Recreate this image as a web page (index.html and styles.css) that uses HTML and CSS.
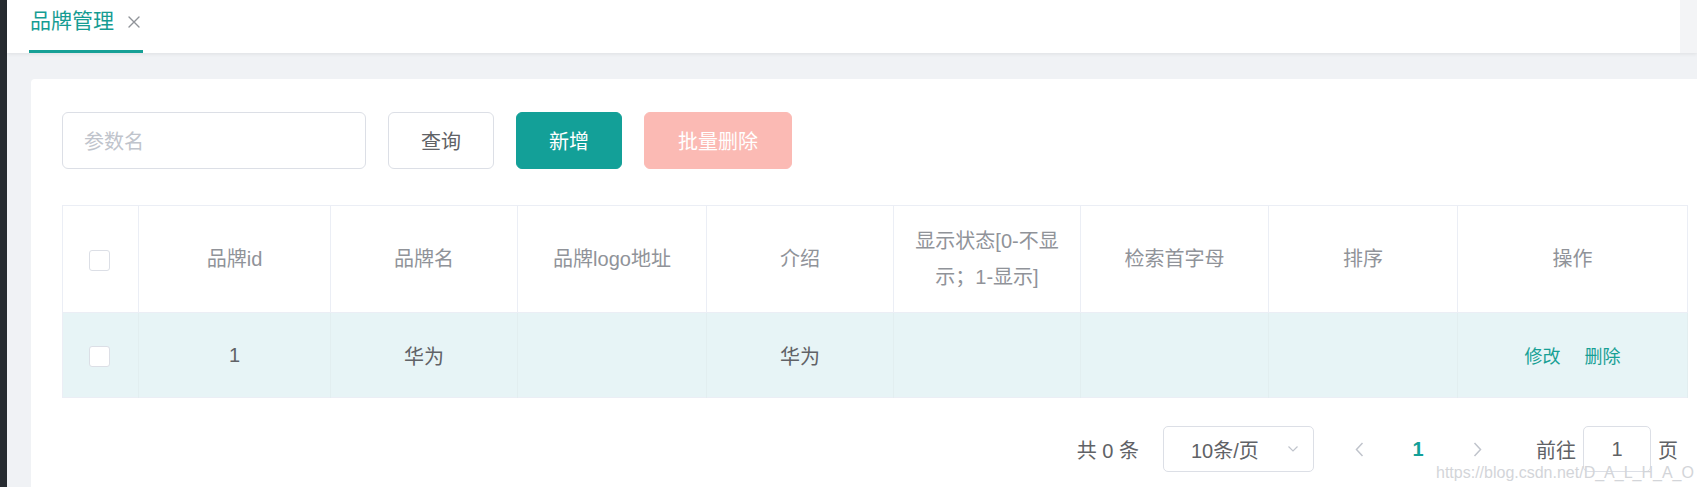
FILE: index.html
```html
<!DOCTYPE html>
<html lang="zh-CN">
<head>
<meta charset="utf-8">
<title>品牌管理</title>
<link rel="stylesheet" href="styles.css">
</head>
<body>
<div class="app">
  <div class="side-edge"></div>
  <div class="main">
    <div class="tabs-bar">
      <div class="tabs-white">
        <div class="tab active">
          <span class="tab-label">品牌管理</span>
          <svg class="tab-close" width="12" height="12" viewBox="0 0 12 12"><path d="M1 1L11 11M11 1L1 11" stroke="#909399" stroke-width="1.4" fill="none" stroke-linecap="round"/></svg>
        </div>
      </div>
      <div class="tabs-strip"></div>
    </div>
    <div class="content">
      <div class="card">
        <div class="toolbar">
          <div class="search-input"><span class="placeholder">参数名</span></div>
          <button class="btn btn-default">查询</button>
          <button class="btn btn-primary">新增</button>
          <button class="btn btn-danger-disabled">批量删除</button>
        </div>
        <table class="grid">
          <colgroup>
            <col class="c-check"><col class="c-id"><col class="c-name"><col class="c-logo"><col class="c-desc"><col class="c-show"><col class="c-letter"><col class="c-sort"><col>
          </colgroup>
          <thead>
            <tr>
              <th><span class="checkbox"></span></th>
              <th>品牌id</th>
              <th>品牌名</th>
              <th>品牌logo地址</th>
              <th>介绍</th>
              <th>显示状态[0-不显示；1-显示]</th>
              <th>检索首字母</th>
              <th>排序</th>
              <th>操作</th>
            </tr>
          </thead>
          <tbody>
            <tr class="body-row">
              <td><span class="checkbox"></span></td>
              <td>1</td>
              <td>华为</td>
              <td></td>
              <td>华为</td>
              <td></td>
              <td></td>
              <td></td>
              <td><span class="op-link">修改</span><span class="op-link">删除</span></td>
            </tr>
          </tbody>
        </table>
        <div class="pagination">
          <span class="total">共 0 条</span>
          <div class="size-select">
            <span>10条/页</span>
            <svg class="select-arrow" width="12" height="8" viewBox="0 0 12 8"><path d="M1.5 1.5L6 6L10.5 1.5" stroke="#c0c4cc" stroke-width="1.2" fill="none"/></svg>
          </div>
          <span class="pg-btn"><svg width="9" height="15" viewBox="0 0 9 15"><path d="M7.5 1L1.5 7.5L7.5 14" stroke="#c0c4cc" stroke-width="1.5" fill="none"/></svg></span>
          <span class="pg-btn pg-num">1</span>
          <span class="pg-btn"><svg width="9" height="15" viewBox="0 0 9 15"><path d="M1.5 1L7.5 7.5L1.5 14" stroke="#c0c4cc" stroke-width="1.5" fill="none"/></svg></span>
          <span class="goto">前往</span>
          <div class="goto-input">1</div>
          <span class="goto-unit">页</span>
        </div>
      </div>
    </div>
  </div>
  <div class="watermark">https://blog.csdn.net/D_A_L_H_A_O</div>
</div>
</body>
</html>
```

FILE: styles.css
```css
html, body {
  margin: 0;
  padding: 0;
  width: 1697px;
  height: 487px;
  overflow: hidden;
  font-family: "Liberation Sans", "Noto Sans CJK SC", sans-serif;
  background: #ffffff;
}

.app {
  position: relative;
  display: flex;
  width: 1697px;
  height: 487px;
  overflow: hidden;
}

.side-edge {
  width: 7px;
  flex: 0 0 7px;
  background: #262b30;
}

.main {
  flex: 1;
  display: flex;
  flex-direction: column;
  min-width: 0;
  background: #f0f2f5;
}

.tabs-bar {
  display: flex;
  height: 53px;
  flex: 0 0 53px;
  box-shadow: 0 1px 4px rgba(0, 0, 0, 0.08);
  position: relative;
  z-index: 1;
}

.tabs-white {
  flex: 1;
  background: #ffffff;
  display: flex;
  padding-left: 22px;
}

.tabs-strip {
  width: 17px;
  flex: 0 0 17px;
  background: #f3f4f6;
}

.tab {
  display: flex;
  align-items: center;
  height: 42px;
  padding: 0 3px 8px 1px;
  border-bottom: 3px solid #16a096;
  gap: 14px;
}

.tab-label {
  font-size: 21px;
  color: #169c93;
  line-height: 42px;
}

.tab-close {
  display: block;
  margin-top: 2px;
}

.content {
  flex: 1;
  padding: 26px 0 0 24px;
  overflow: hidden;
}

.card {
  background: #ffffff;
  width: 1626px;
  padding: 33px 31px 40px 31px;
  border-radius: 4px;
  height: 400px;
}

.toolbar {
  display: flex;
  align-items: center;
  height: 57px;
}

.search-input {
  box-sizing: border-box;
  width: 304px;
  height: 57px;
  border: 1px solid #dcdfe6;
  border-radius: 6px;
  display: flex;
  align-items: center;
  padding-left: 21px;
}

.placeholder {
  font-size: 20px;
  color: #c0c4cc;
}

.btn {
  box-sizing: border-box;
  height: 57px;
  margin-left: 22px;
  padding: 0 32px;
  font-family: inherit;
  font-size: 20px;
  border-radius: 6px;
  border: 1px solid #dcdfe6;
  background: #ffffff;
  color: #606266;
}

.btn-primary {
  background: #13a098;
  border-color: #13a098;
  color: #ffffff;
}

.btn-danger-disabled {
  background: #fbbab4;
  border-color: #fbbab4;
  color: #ffffff;
  padding: 0 33px;
}

.grid {
  margin-top: 36px;
  width: 1626px;
  border-collapse: collapse;
  table-layout: fixed;
  border: 1px solid #ebeef5;
}

.c-check { width: 76px; }
.c-id { width: 192px; }
.c-name { width: 187px; }
.c-logo { width: 189px; }
.c-desc { width: 187px; }
.c-show { width: 187px; }
.c-letter { width: 188px; }
.c-sort { width: 189px; }

.grid th {
  box-sizing: border-box;
  padding: 17px 14px;
  line-height: 36px;
  font-size: 20px;
  font-weight: normal;
  color: #909399;
  text-align: center;
  vertical-align: middle;
  border-right: 1px solid #ebeef5;
  border-bottom: 1px solid #ebeef5;
  background: #ffffff;
}

.grid td {
  box-sizing: border-box;
  height: 85px;
  padding: 0 14px;
  font-size: 20px;
  color: #606266;
  text-align: center;
  vertical-align: middle;
  border-right: 1px solid #e2eef0;
  background: #e7f4f6;
}

.checkbox {
  display: inline-block;
  box-sizing: border-box;
  width: 21px;
  height: 21px;
  border: 1px solid #dcdfe6;
  border-radius: 3px;
  background: #ffffff;
  vertical-align: middle;
  margin-right: 3px;
}

.op-link {
  font-size: 18px;
  color: #17a095;
  margin: 0 12px;
}

.pagination {
  display: flex;
  align-items: center;
  justify-content: flex-end;
  margin-top: 28px;
  height: 46px;
  padding-right: 10px;
  font-size: 20px;
  color: #606266;
}

.total {
  margin-right: 24px;
}

.size-select {
  box-sizing: border-box;
  width: 151px;
  height: 46px;
  border: 1px solid #dcdfe6;
  border-radius: 5px;
  display: flex;
  align-items: center;
  justify-content: space-between;
  padding: 0 14px 0 27px;
}

.select-arrow {
  display: block;
}

.pg-btn {
  width: 50px;
  height: 46px;
  display: flex;
  align-items: center;
  justify-content: center;
  margin-left: 9px;
}

.size-select + .pg-btn {
  margin-left: 20px;
}

.pg-num {
  color: #13a098;
  font-weight: bold;
}

.goto {
  margin-left: 34px;
}

.goto-input {
  box-sizing: border-box;
  width: 68px;
  height: 46px;
  margin: 0 7px;
  border: 1px solid #dcdfe6;
  border-radius: 5px;
  display: flex;
  align-items: center;
  justify-content: center;
}

.watermark {
  position: absolute;
  left: 1436px;
  top: 464px;
  font-family: "Liberation Sans", sans-serif;
  font-size: 16px;
  color: #d3d5d9;
  white-space: nowrap;
}
```
